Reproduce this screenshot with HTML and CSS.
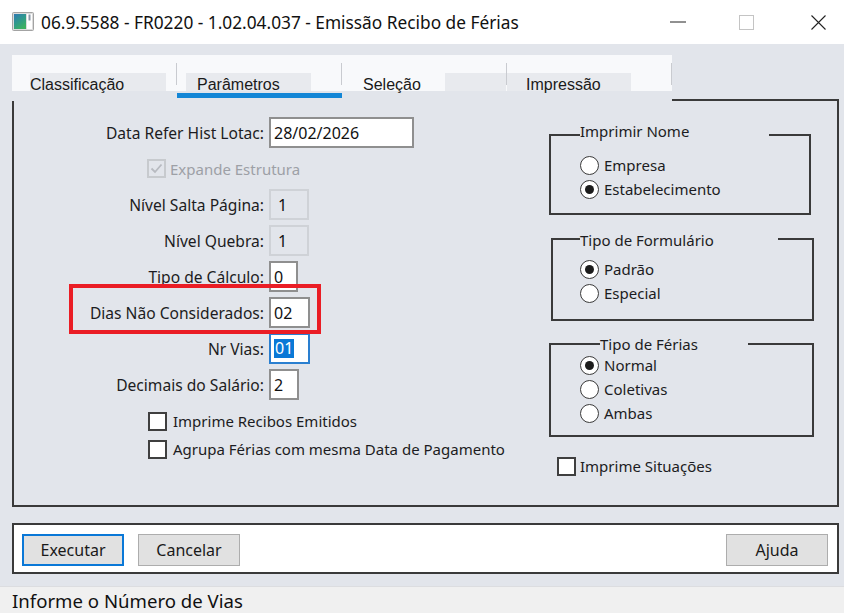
FILE: index.html
```html
<!DOCTYPE html>
<html lang="pt-BR">
<head>
<meta charset="utf-8">
<title>Emissão Recibo de Férias</title>
<link rel="stylesheet" href="styles.css">
</head>
<body>
<div class="window">
  <header class="titlebar">
    <svg class="appicon" viewBox="0 0 22 19" aria-hidden="true">
      <defs>
        <linearGradient id="ig" x1="0" y1="0" x2="0.6" y2="1">
          <stop offset="0" stop-color="#2f79b4"/>
          <stop offset="0.55" stop-color="#2f9a8a"/>
          <stop offset="1" stop-color="#3bb061"/>
        </linearGradient>
      </defs>
      <rect x="0.5" y="0.5" width="21" height="18" rx="1" fill="#dcdcdc" stroke="#a3a3a3"/>
      <rect x="2" y="2" width="12" height="15" fill="url(#ig)"/>
      <rect x="15" y="2" width="5" height="15" fill="#ffffff"/>
      <rect x="16.5" y="2.5" width="2" height="6" fill="#8a97a6"/>
    </svg>
    <span class="title">06.9.5588 - FR0220 - 1.02.04.037 - Emissão Recibo de Férias</span>
    <div class="controls">
      <span class="ctl">
        <svg width="16" height="2" viewBox="0 0 16 2"><line x1="0" y1="1" x2="16" y2="1" stroke="#222" stroke-width="1"/></svg>
      </span>
      <span class="ctl">
        <svg width="15" height="15" viewBox="0 0 15 15"><rect x="0.5" y="0.5" width="14" height="14" fill="none" stroke="#c4c4c4" stroke-width="1"/></svg>
      </span>
      <span class="ctl ctl--close">
        <svg width="15" height="15" viewBox="0 0 15 15"><path d="M0.5 0.5 L14.5 14.5 M14.5 0.5 L0.5 14.5" stroke="#222" stroke-width="1.1" fill="none"/></svg>
      </span>
    </div>
  </header>

  <main class="client">
    <div class="tabrow">
      <nav class="tabstrip">
        <div class="tab">
          <div class="tab-bottom tab-bottom--first"><span class="tab-shade tab-shade--first">Classificação</span></div>
        </div>
        <span class="sep"></span>
        <div class="tab">
          <div class="tab-bottom tab-bottom--second"><span class="tab-shade tab-shade--second">Parâmetros</span></div>
        </div>
        <span class="sep"></span>
        <div class="tab">
          <div class="tab-bottom tab-bottom--third"><span class="tab-text">Seleção</span><span class="tab-shade tab-shade--tail"></span></div>
        </div>
        <span class="sep"></span>
        <div class="tab">
          <div class="tab-bottom"><span class="tab-shade tab-shade--fourth">Impressão</span></div>
        </div>
        <span class="sep"></span>
      </nav>
      <div class="tab-indicator"></div>
    </div>

    <section class="page">
      <div class="leftcol">
        <div class="field">
          <span class="field-label">Data Refer Hist Lotac:</span>
          <span class="input input--date">28/02/2026</span>
        </div>
        <div class="check-row check-row--expande">
          <span class="checkbox checkbox--disabled">
            <svg width="15" height="15" viewBox="0 0 15 15"><path d="M2.5 7.5 L6 11 L12.5 3.5" fill="none" stroke="#b7bac0" stroke-width="1.8"/></svg>
          </span>
          <span class="check-label check-label--disabled">Expande Estrutura</span>
        </div>
        <div class="fields">
          <div class="field">
            <span class="field-label">Nível Salta Página:</span>
            <span class="input input--disabled input--w40">1</span>
          </div>
          <div class="field">
            <span class="field-label">Nível Quebra:</span>
            <span class="input input--disabled input--w40">1</span>
          </div>
          <div class="field">
            <span class="field-label">Tipo de Cálculo:</span>
            <span class="input input--w29">0</span>
          </div>
          <div class="field field--marked">
            <span class="field-label">Dias Não Considerados:</span>
            <span class="input input--w41">02</span>
            <span class="highlight-box"></span>
          </div>
          <div class="field">
            <span class="field-label">Nr Vias:</span>
            <span class="input input--w41 input--focus"><span class="selected">01</span></span>
          </div>
          <div class="field">
            <span class="field-label">Decimais do Salário:</span>
            <span class="input input--w30">2</span>
          </div>
        </div>
        <div class="checks">
          <div class="check-row">
            <span class="checkbox"></span>
            <span class="check-label">Imprime Recibos Emitidos</span>
          </div>
          <div class="check-row">
            <span class="checkbox"></span>
            <span class="check-label">Agrupa Férias com mesma Data de Pagamento</span>
          </div>
        </div>
      </div>

      <div class="rightcol">
        <fieldset class="group group--nome">
          <legend>Imprimir Nome</legend>
          <div class="radio-row"><span class="radio"></span><span class="radio-label">Empresa</span></div>
          <div class="radio-row"><span class="radio radio--on"></span><span class="radio-label">Estabelecimento</span></div>
        </fieldset>
        <fieldset class="group group--form">
          <legend>Tipo de Formulário</legend>
          <div class="radio-row"><span class="radio radio--on"></span><span class="radio-label">Padrão</span></div>
          <div class="radio-row"><span class="radio"></span><span class="radio-label">Especial</span></div>
        </fieldset>
        <fieldset class="group group--ferias">
          <legend>Tipo de Férias</legend>
          <div class="radio-row"><span class="radio radio--on"></span><span class="radio-label">Normal</span></div>
          <div class="radio-row"><span class="radio"></span><span class="radio-label">Coletivas</span></div>
          <div class="radio-row"><span class="radio"></span><span class="radio-label">Ambas</span></div>
        </fieldset>
        <div class="check-row check-row--situacoes">
          <span class="checkbox"></span>
          <span class="check-label check-label--tight">Imprime Situações</span>
        </div>
      </div>
    </section>

    <div class="buttonbar">
      <span class="btn btn--primary">Executar</span>
      <span class="btn">Cancelar</span>
      <span class="btn btn--help">Ajuda</span>
    </div>
  </main>

  <footer class="statusbar">Informe o Número de Vias</footer>
</div>
</body>
</html>
```

FILE: styles.css
```css
* { box-sizing: border-box; }

html, body { margin: 0; padding: 0; }

body {
  width: 844px;
  height: 613px;
  overflow: hidden;
  background: #ffffff;
  font-family: "Noto Sans", "Open Sans", sans-serif;
  font-size: 15px;
  color: #1c1c22;
}

.window { width: 844px; height: 613px; display: flex; flex-direction: column; }

/* ---------- title bar ---------- */
.titlebar {
  height: 44px;
  flex: none;
  display: flex;
  align-items: center;
  background: #ffffff;
  padding-left: 12px;
}
.appicon { width: 22px; height: 19px; flex: none; margin-top: -1px; }
.title {
  flex: 1;
  margin-left: 7px;
  font-size: 17.3px;
  color: #111111;
  white-space: nowrap;
}
.controls { display: flex; height: 44px; flex: none; }
.ctl {
  width: 69px;
  height: 44px;
  display: flex;
  align-items: center;
  justify-content: center;
}
.ctl--close { width: 63px; padding-left: 11px; }

/* ---------- client ---------- */
.client {
  height: 542px;
  flex: none;
  background: #e2e5eb;
  padding: 11px 5px 0 12px;
  display: flex;
  flex-direction: column;
}

.tabrow {
  width: 660px;
  height: 46px;
  flex: none;
  margin-bottom: -2px;
  position: relative;
  z-index: 1;
  background: #e2e5eb;
}
.tabstrip { display: flex; height: 36px; background: #f8f9fb; }
.tab {
  width: 164px;
  display: flex;
  flex-direction: column;
  justify-content: flex-end;
  font-family: "Liberation Sans", Arial, sans-serif;
  font-size: 16px;
  color: #1a1a1a;
}
.tab-bottom { height: 18px; display: flex; line-height: 23px; white-space: nowrap; }
.tab-bottom--first { padding-left: 18px; }
.tab-bottom--second { padding-left: 9px; }
.tab-shade { background: #e8eaee; height: 18px; }
.tab-shade--first { width: 136px; }
.tab-shade--second { width: 125px; padding-left: 11px; }
.tab-shade--fourth { width: 124px; padding-left: 19px; }
.tab-text { padding-left: 21px; }
.tab-shade--tail { margin-left: auto; width: 61px; }
.sep { width: 1px; height: 22px; margin-top: 8px; background: #c9cbd0; flex: none; }
.tab-indicator {
  margin-left: 165px;
  width: 165px;
  height: 5px;
  margin-top: 2px;
  background: #1386d6;
}

/* ---------- page ---------- */
.page {
  height: 408px;
  flex: none;
  border: 2px solid #3a3a3a;
  display: flex;
}

.leftcol {
  width: 535px;
  flex: none;
  padding-top: 16px;
  display: flex;
  flex-direction: column;
}
.fields { display: flex; flex-direction: column; gap: 5px; }
.field { display: flex; align-items: center; height: 31px; white-space: nowrap; }
.field--marked { position: relative; }
.field-label { width: 250px; text-align: right; font-size: 15.6px; }
.input {
  margin-left: 5px;
  height: 31px;
  border: 2px solid #8f8f8f;
  background: #ffffff;
  padding-left: 3px;
  display: flex;
  align-items: center;
  font-size: 16px;
  color: #111111;
}
.input--date { width: 145px; }
.input--w40 { width: 40px; }
.input--w29 { width: 29px; }
.input--w30 { width: 30px; }
.input--w41 { width: 41px; }
.input--disabled {
  background: #e2e5eb;
  border-color: #cfd2d7;
  padding-left: 7px;
}
.input--focus { border-color: #2a7fd0; }
.selected { background: #0a78d6; color: #ffffff; line-height: 19px; padding: 0 1px; }

.highlight-box {
  position: absolute;
  left: 55px;
  top: -13px;
  width: 252px;
  height: 50px;
  border: 4px solid #ea1d25;
  pointer-events: none;
}

.check-row { display: flex; align-items: center; height: 28px; padding-left: 134px; white-space: nowrap; }
.check-row--expande { height: 41px; padding-left: 133px; }
.checks { margin-top: 7px; display: flex; flex-direction: column; }
.checkbox {
  width: 19px;
  height: 19px;
  flex: none;
  border: 2px solid #3f3f3f;
  background: #ffffff;
  display: flex;
  align-items: center;
  justify-content: center;
}
.checkbox--disabled { border-color: #c7cace; background: #e2e5eb; }
.check-label { margin-left: 6px; }
.check-label--disabled { margin-left: 4px; color: #9da0a6; }
.check-label--tight { margin-left: 4px; }

/* ---------- group boxes ---------- */
.rightcol {
  flex: 1;
  padding-top: 21px;
  display: flex;
  flex-direction: column;
}
.group {
  margin: 0;
  border: 2px solid #3a3a3a;
  min-width: 0;
}
.group legend {
  padding: 0;
  line-height: 18px;
  white-space: nowrap;
}
.group--nome { width: 262px; padding: 5px 0 12px 29px; }
.group--nome legend { width: 189px; padding-bottom: 8px; }
.group--form { width: 263px; margin: 14px 0 0 2px; padding: 8px 0 14px 27px; }
.group--form legend { width: 198px; padding-top: 2px; }
.group--ferias { width: 265px; margin-top: 14px; padding: 0 0 10px 29px; }
.group--ferias legend { width: 148px; margin-left: 20px; }

.radio-row { display: flex; align-items: center; height: 24px; white-space: nowrap; }
.radio {
  width: 19px;
  height: 19px;
  flex: none;
  border-radius: 50%;
  border: 1.5px solid #3a3a3a;
  background: #ffffff;
  display: flex;
  align-items: center;
  justify-content: center;
}
.radio--on::after {
  content: "";
  width: 9px;
  height: 9px;
  border-radius: 50%;
  background: #1c1c1c;
}
.radio-label { margin-left: 5px; }

.check-row--situacoes { padding-left: 8px; height: 24px; margin-top: 17px; }

/* ---------- buttons ---------- */
.buttonbar {
  margin-top: 16px;
  height: 51px;
  flex: none;
  border: 2px solid #3a3a3a;
  background: #ffffff;
  display: flex;
  padding: 9px 9px 0 8px;
}
.btn {
  width: 102px;
  height: 32px;
  background: #e1e1e1;
  border: 1px solid #adadad;
  display: flex;
  align-items: center;
  justify-content: center;
  font-size: 16px;
  color: #1a1a1a;
}
.btn + .btn { margin-left: 14px; }
.btn--primary { border: 2px solid #0a78d7; }
.btn.btn--help { margin-left: auto; }

/* ---------- status bar ---------- */
.statusbar {
  flex: 1;
  background: #f0f0f0;
  border-top: 1px solid #dcdde0;
  padding: 3px 0 0 12px;
  font-size: 18.6px;
  line-height: 22px;
  color: #111111;
  white-space: nowrap;
}
```
